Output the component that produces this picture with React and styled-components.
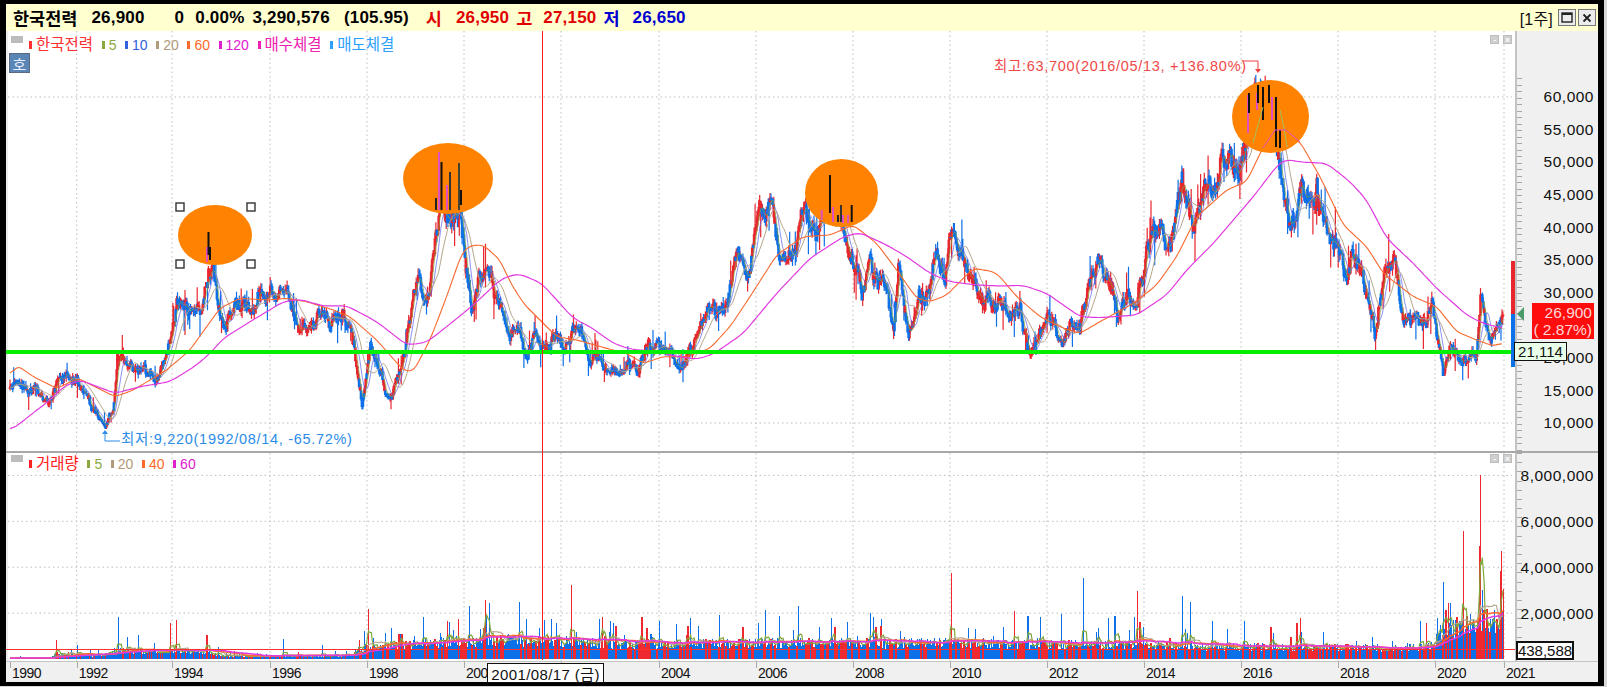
import styled, { createGlobalStyle } from "styled-components";

const GlobalStyle = createGlobalStyle`
    html, body {
        margin: 0;
        padding: 0;
        background: #d8d8d8;
    }
`

const Frame = styled.div`
    width: 1604px;
    height: 686px;
    box-sizing: border-box;
    padding: 4px 6px;
    background: #000;
    overflow: hidden;
`

const Window = styled.div`
    width: 1592px;
    height: 678px;
    background: #f0f0f0;
    display: flex;
    flex-direction: column;
`

const Header = styled.div`
    height: 27px;
    background: #ffffd0;
    display: flex;
    align-items: center;
    padding-left: 7px;
    font: bold 17px "Liberation Sans", "Noto Sans CJK KR", sans-serif;
    letter-spacing: 0.2px;
`

const Quote = styled.span`
    margin-left: ${props => props.$gap || 0}px;
    color: ${props => props.$color || "#000"};
    ${props => props.$hangul && "font-size: 17.5px; letter-spacing: 0;"}
    white-space: nowrap;
`

const WindowButtons = styled.div`
    margin-left: auto;
    display: flex;
    align-items: center;
    gap: 2px;
    padding-right: 2px;
`

const Period = styled.span`
    font: 16px "Liberation Sans", "Noto Sans CJK KR", sans-serif;
    margin-right: 3px;
    color: #111;
`

const WinButton = styled.button`
    width: 18px;
    height: 17px;
    padding: 0;
    border: 1px solid #777;
    background: #ececec;
    display: flex;
    align-items: center;
    justify-content: center;
`

const ChartArea = styled.div`
    position: relative;
    flex: 1;
    display: flex;
    flex-direction: column;
`

const Panel = styled.div`
    display: flex;
    height: ${props => props.$height}px;
    border-bottom: ${props => props.$divider ? "2px solid #a8a8a8" : "none"};
`

const Plot = styled.div`
    position: relative;
    width: 1509px;
    background: #fff;
    border-left: 2px solid #ececec;
    box-sizing: border-box;
`

const ChartSvg = styled.svg`
    display: block;
    position: absolute;
    left: -2px;
    top: 0;
    overflow: hidden;
`

const Axis = styled.div`
    position: relative;
    width: 83px;
    box-sizing: border-box;
    border-left: 2px solid #c4c4c4;
    padding-top: ${props => props.$top}px;
    background-color: #f0f0f0;
    background-image: repeating-linear-gradient(to bottom, #a8a8a8 0 1px, transparent 1px ${props => props.$step}px);
    background-size: 5px 100%;
    background-repeat: no-repeat;
    background-position: 0 ${props => props.$ticksFrom}px;
`

const AxisLabel = styled.div`
    height: ${props => props.$height}px;
    display: flex;
    align-items: center;
    justify-content: flex-end;
    padding-right: 4px;
    font: 15.5px "Liberation Sans", sans-serif;
    letter-spacing: 0.5px;
    color: #111;
`

const Legend = styled.div`
    position: absolute;
    left: 21px;
    top: ${props => props.$top}px;
    display: flex;
    align-items: center;
    gap: 8.6px;
    z-index: 2;
`

const LegendItem = styled.span`
    display: flex;
    align-items: center;
    gap: 4px;
    color: ${props => props.$color};
    font: ${props => props.$digits ? "14px" : "15.5px"} "Liberation Sans", "Noto Sans CJK KR", sans-serif;
    line-height: 18px;
    &::before {
        content: "";
        width: 3px;
        height: 8px;
        background: ${props => props.$color};
    }
`

const PanelGrip = styled.div`
    position: absolute;
    left: 3px;
    top: ${props => props.$top}px;
    width: 12px;
    height: 7px;
    background: #bcbcbc;
`

const HoButton = styled.div`
    position: absolute;
    left: 1px;
    top: 22px;
    width: 21px;
    height: 20px;
    box-sizing: border-box;
    border: 1px solid #5a6a80;
    background: #5b85b5;
    color: #e8f0ff;
    font: 15px "Noto Sans CJK KR", sans-serif;
    display: flex;
    align-items: center;
    justify-content: center;
`

const MiniButtons = styled.div`
    position: absolute;
    right: 3px;
    top: ${props => props.$top}px;
    display: flex;
    gap: 4px;
`

const MiniButton = styled.div`
    width: 9px;
    height: 9px;
    background: #cfcfcf;
    border: 1px solid #bdbdbd;
    box-sizing: border-box;
    color: #fff;
    font: bold 8px/7px "Liberation Sans", sans-serif;
    text-align: center;
`

const Note = styled.div`
    position: absolute;
    left: ${props => props.$left}px;
    top: ${props => props.$top}px;
    color: ${props => props.$color};
    font: 14.5px "Liberation Sans", "Noto Sans CJK KR", sans-serif;
    letter-spacing: 0.7px;
    white-space: nowrap;
`

const ValueBox = styled.div`
    position: absolute;
    left: ${props => props.$left}px;
    top: ${props => props.$top}px;
    width: ${props => props.$width}px;
    height: 19px;
    box-sizing: border-box;
    border: ${props => props.$thick ? 2 : 1}px solid #111;
    background: ${props => props.$bg};
    color: #111;
    font: 15px "Liberation Sans", sans-serif;
    display: flex;
    align-items: center;
    justify-content: center;
    z-index: 3;
`

const PriceTag = styled.div`
    position: absolute;
    right: 4px;
    top: 272px;
    width: 62px;
    height: 36px;
    background: #ff0c0c;
    color: #ffd8d8;
    font: 15.5px/17px "Liberation Sans", sans-serif;
    text-align: right;
    padding: 1px 2px 0 0;
    box-sizing: border-box;
    white-space: pre;
`

const Marker = styled.div`
    position: absolute;
    left: 0;
    top: 276px;
    width: 0;
    height: 0;
    border-top: 7px solid transparent;
    border-bottom: 7px solid transparent;
    border-right: 7px solid #4a9a6a;
`

const CrossHair = styled.div`
    position: absolute;
    left: 536px;
    top: 0;
    width: 1px;
    height: 629px;
    background: #ff1c1c;
    z-index: 2;
`

const TimeAxis = styled.div`
    position: relative;
    flex: 1;
    display: flex;
    padding-left: 4px;
    border-top: 1px solid #c4c4c4;
    font: 14px "Liberation Sans", sans-serif;
    letter-spacing: -0.5px;
    color: #111;
`

const YearCell = styled.div`
    width: ${props => props.$width}px;
    flex-shrink: 0;
    box-sizing: border-box;
    padding: 3px 0 0 2px;
    background: linear-gradient(#a8a8a8, #a8a8a8) left top / 1px 6px no-repeat;
`

const DateTag = styled.div`
    position: absolute;
    left: 481px;
    top: 1px;
    width: 117px;
    height: 20px;
    box-sizing: border-box;
    border: 1px solid #111;
    background: #fff;
    font: 15px "Liberation Sans", "Noto Sans CJK KR", sans-serif;
    letter-spacing: 0.4px;
    display: flex;
    align-items: center;
    justify-content: center;
    z-index: 3;
`

const RED = "#e8262e";
const BLUE = "#0c70e8";
const MAGENTA = "#e23ae0";
const ORANGE = "#f8692f";
const TAN = "#b4a48a";
const GREEN = "#80a83c";
const MA_BLUE = "#5a62ee";

const rng = (seed) => () => {
    seed = (seed + 0x6d2b79f5) | 0;
    let t = Math.imul(seed ^ (seed >>> 15), 1 | seed);
    t = (t + Math.imul(t ^ (t >>> 7), 61 | t)) ^ t;
    return ((t ^ (t >>> 14)) >>> 0) / 4294967296;
};

// points were read off 3x crops, so they get mapped back to page pixels here
const crop = (x0, y0, pts, maxX = Infinity) =>
    pts.map(([x, y]) => [x0 + x / 3, y0 + y / 3]).filter(p => p[0] < maxX);

const lerpAt = (pts, x) => {
    if (x <= pts[0][0]) return pts[0][1];
    for (let i = 1; i < pts.length; i++) {
        if (x <= pts[i][0]) {
            const [ax, ay] = pts[i - 1];
            const [bx, by] = pts[i];
            return ay + ((by - ay) * (x - ax)) / (bx - ax || 1);
        }
    }
    return pts[pts.length - 1][1];
};

const smooth = (pts, radius) => {
    const out = [];
    const first = pts[0][0];
    const last = pts[pts.length - 1][0];
    for (let x = first; x <= last; x += 2) {
        const from = Math.max(first, x - radius);
        const to = Math.min(last, x + radius);
        let sum = 0;
        let n = 0;
        for (let k = from; k <= to; k += 2) {
            sum += lerpAt(pts, k);
            n++;
        }
        out.push([x, sum / n]);
    }
    return out;
};

const pricePath = [
    ...crop(0, 130, [[30,770],[55,750],[90,770],[150,815],[175,750],[200,745],[235,755],[270,825],[315,885],[340,830],[355,660],[385,710],[420,720],[465,750],[510,640],[530,520],[560,540],[600,560],[625,420],[640,440],[670,600],[700,530],[740,510],[760,550],[790,460],[830,520],[860,470],[895,590],[940,590],[970,540],[990,590],[1030,540],[1060,640],[1085,830],[1110,640],[1135,700],[1165,810],[1205,730],[1225,590],[1250,450],[1280,500],[1300,350],[1320,180],[1345,240],[1380,220],[1395,380],[1415,560],[1440,440],[1470,430],[1510,580]], 510),
    ...crop(510, 130, [[0,600],[25,590],[45,670],[75,620],[110,670],[140,620],[165,650],[190,590],[215,600],[240,670],[280,710],[330,735],[350,690],[385,715],[415,630],[450,660],[470,650],[510,715],[550,650],[590,540],[640,545],[675,400],[715,410],[745,270],[785,220],[810,400],[850,360],[885,240],[915,330],[960,200],[1000,270],[1010,350],[1045,420],[1055,510],[1080,420],[1105,480],[1120,430],[1150,620],[1165,430],[1195,620],[1225,500],[1245,510],[1280,385],[1305,440],[1325,270],[1350,340],[1375,440],[1420,500],[1450,530]], 1000),
    ...crop(1000, 50, [[0,760],[30,810],[60,760],[85,900],[105,900],[145,780],[185,890],[215,820],[240,830],[260,750],[295,640],[340,740],[355,810],[380,730],[405,770],[440,620],[485,510],[510,590],[545,370],[580,520],[625,390],[645,440],[665,330],[715,380],[770,110],[790,180],[810,110],[835,280],[855,430],[885,520],[905,430],[945,510],[950,430],[985,580],[1010,560],[1040,690],[1060,590],[1090,700],[1125,840],[1155,640],[1182,630],[1210,820],[1240,810],[1280,820],[1295,760],[1330,1000],[1350,880],[1380,950],[1430,910],[1442,740],[1465,860],[1490,860],[1510,790]]),
];

const ma120 = [
    ...crop(0, 130, [[30,903],[150,810],[190,770],[240,750],[345,790],[420,770],[510,755],[590,705],[630,670],[670,625],[750,575],[850,515],[900,508],[970,528],[1040,527],[1130,575],[1220,645],[1280,637],[1340,590],[1420,525],[1500,450]], 510),
    ...crop(510, 130, [[0,437],[30,432],[95,460],[140,510],[190,565],[240,590],[310,640],[360,657],[440,665],[480,675],[560,688],[610,672],[700,610],[800,490],[900,385],[1000,320],[1050,308],[1130,345],[1190,380],[1260,430],[1320,455],[1400,465]], 1000),
    ...crop(1000, 50, [[0,708],[70,706],[140,730],[190,765],[240,800],[300,803],[410,795],[500,735],[560,660],[640,580],[700,510],[760,440],[835,342],[860,328],[900,336],[980,340],[1050,395],[1100,450],[1160,565],[1240,640],[1310,715],[1400,795],[1450,820],[1510,835]]),
];

const ma60 = [
    ...crop(0, 130, [[30,740],[50,705],[100,740],[170,775],[235,745],[345,800],[400,780],[500,720],[570,660],[620,590],[660,535],[720,505],[800,510],[860,505],[920,515],[1000,540],[1050,560],[1130,630],[1210,720],[1240,725],[1290,630],[1340,500],[1385,370],[1410,347],[1450,345],[1500,390]], 510),
    ...crop(510, 130, [[0,455],[40,520],[90,570],[140,620],[200,630],[290,655],[350,670],[400,700],[460,680],[530,680],[600,655],[660,590],[720,500],[800,375],[880,320],[960,315],[1030,285],[1100,340],[1160,420],[1220,505],[1260,515],[1310,495],[1390,415],[1450,425]], 1000),
    ...crop(1000, 50, [[0,680],[50,740],[120,800],[190,835],[240,850],[300,815],[400,760],[470,705],[530,620],[590,500],[680,420],[740,395],[790,290],[830,240],[900,275],[960,380],[1030,525],[1100,590],[1150,670],[1240,740],[1310,770],[1370,845],[1430,870],[1480,888],[1510,878]]),
];

const toPolyline = (pts) => pts.map(p => `${p[0].toFixed(1)},${p[1].toFixed(1)}`).join(" ");

const movingAvg = (xs, ys, n) => xs.map((x, i) => {
    const from = Math.max(0, i - n + 1);
    let sum = 0;
    for (let k = from; k <= i; k++) sum += ys[k];
    return [x, sum / (i - from + 1)];
});

const STEP = 0.936;
const START_X = 10;
const END_X = 1503;

const buildCandles = () => {
    const rand = rng(20210108);
    const xs = [];
    const closes = [];
    const wicks = { up: "", down: "" };
    const bodies = { up: "", down: "" };
    let fast = 0;
    let slow = 0;
    let prev = lerpAt(pricePath, START_X);
    for (let x = START_X; x <= END_X; x += STEP) {
        const base = lerpAt(pricePath, x);
        const amp = 2.4 + (423 - base) * 0.02;
        fast = fast * 0.5 + (rand() - 0.5) * amp * 2.8;
        slow = slow * 0.88 + (rand() - 0.5) * amp * 1.1;
        const close = base + fast + slow;
        const top = Math.min(prev, close) - rand() * amp * 1.3 - (rand() < 0.1 ? rand() * amp * 4.5 : 0);
        const bottom = Math.max(prev, close) + rand() * amp * 1.3 + (rand() < 0.1 ? rand() * amp * 4.5 : 0);
        let key = close < prev ? "up" : "down";
        if (rand() < 0.22) key = key === "up" ? "down" : "up";
        const px = x.toFixed(1);
        wicks[key] += `M${px} ${top.toFixed(1)}V${bottom.toFixed(1)}`;
        bodies[key] += `M${px} ${Math.min(prev, close).toFixed(1)}V${(Math.max(prev, close) + 0.6).toFixed(1)}`;
        xs.push(x);
        closes.push(close);
        prev = close;
    }
    return { xs, closes, wicks, bodies };
};

const VOL_BASE = 658;
const volProfile = [[10,1],[50,1],[56,6],[100,4],[112,8],[125,10],[160,8],[200,9],[225,3],[350,4],[362,13],[380,14],[460,21],[560,21],[600,18],[700,18],[900,19],[1000,18],[1230,14],[1400,13],[1432,15],[1440,32],[1470,42],[1503,45]];
const volSpikes = [
    [56,639,"r"],[118,616,"b"],[170,622,"r"],[176,619,"r"],[206,634,"r"],[283,638,"b"],[322,644,"b"],[368,608,"r"],
    [447,620,"r"],[458,618,"r"],[469,605,"b"],[485,599,"r"],[489,602,"b"],[556,622,"b"],[571,584,"r"],[599,618,"b"],[602,616,"r"],
    [798,605,"b"],[951,572,"r"],[1014,610,"r"],[1028,615,"b"],[1083,577,"b"],[1115,615,"b"],[1137,590,"r"],[1182,595,"b"],[1190,601,"b"],
    [1300,617,"r"],[1426,622,"r"],[1443,581,"b"],[1448,602,"r"],[1463,530,"r"],[1479,545,"r"],[1480,474,"r"],[1501,550,"r"],[1503,588,"r"],
];

const buildVolume = () => {
    const rand = rng(77123);
    const xs = [];
    const hs = [];
    const bars = { r: "", b: "", rWide: "" };
    for (let x = START_X; x <= END_X; x += STEP) {
        const base = lerpAt(volProfile, x);
        let h = base * (0.55 + rand() * 0.6);
        if (rand() < 0.07) h *= 1.6 + rand() * 1;
        let key = rand() < 0.22 ? "r" : "b";
        const spike = volSpikes.find(s => Math.abs(s[0] - x) < STEP / 2 + 0.1);
        if (spike) {
            h = VOL_BASE - spike[1];
            key = spike[2];
        } else if (key === "r" && x > 360) {
            // most red weeks after the 1997 jump read as 2px columns
            key = "rWide";
        }
        bars[key] += `M${Math.round(x) + 0.5} ${VOL_BASE}V${Math.round(VOL_BASE - h)}`;
        xs.push(x);
        hs.push(h);
    }
    const line = (n) => movingAvg(xs, hs, n).map(([x, h]) => [x, VOL_BASE - h]);
    return { bars, line };
};

const candles = buildCandles();
const volume = buildVolume();

const priceTicks = [60000, 55000, 50000, 45000, 40000, 35000, 30000, 25000, 20000, 15000, 10000];
const priceY = (p) => 423 - (p - 10000) * 0.0652;
const volTicks = [8000000, 6000000, 4000000, 2000000];
const volY = (v) => VOL_BASE - (v / 1000000) * 22.95;
const yearTicks = [10, 76.7, 172, 270, 367, 464, 561, 659, 756, 853, 950, 1047, 1144, 1241, 1338, 1435, 1504];

const ellipses = [
    { cx: 215, cy: 235, rx: 37, ry: 30 },
    { cx: 448, cy: 178.5, rx: 45, ry: 35.5 },
    { cx: 841.5, cy: 193, rx: 36.5, ry: 34 },
    { cx: 1270.5, cy: 116.5, rx: 38.5, ry: 36.5 },
];

// candles that stay visible through the orange circles: [x, top, bottom, colour]
const circleBars = [
    [207,247,262,"#e050c0"],[208.5,232,255,"#111"],[210,247,260,"#111"],
    [436,198,210,"#222"],[439,152,210,"#e050c0"],[441.5,162,210,"#111"],[447,185,210,"#e050c0"],[450,172,210,"#333"],[459,163,210,"#443"],[461,190,205,"#111"],
    [821.7,210,220,"#e050c0"],[830,175,213,"#111"],[833,207,222,"#e050c0"],[838,215,222,"#222"],[841,205,222,"#333"],[843,215,223,"#e050c0"],[848,215,223,"#e050c0"],[851.7,205,222,"#111"],
    [1248,95,133,"#e050c0"],[1249,93,113,"#111"],[1257,93,110,"#e050c0"],[1258,85,103,"#111"],[1263,87,120,"#111"],[1269,85,103,"#111"],[1272,97,120,"#e050c0"],[1276,97,147,"#111"],[1280,130,148,"#111"],
];

const handles = [[180, 207], [251, 207], [180, 264], [251, 264]];

const Grid = ({ left, right, top, bottom, rows }) => (
    <g stroke="#bdbdbd" strokeWidth="1" strokeDasharray="1.5 3">
        {yearTicks.slice(1).map(x => <line key={x} x1={x} x2={x} y1={top} y2={bottom} />)}
        {rows.map(y => <line key={y} x1={left} x2={right} y1={y} y2={y} />)}
    </g>
);

const PriceChart = () => (
    <ChartSvg width="1509" height="418" viewBox="6 31 1509 418">
        <Grid left={8} right={1512} top={31} bottom={449} rows={priceTicks.map(priceY)} />
        <g fill="none">
            <path d={candles.wicks.up} stroke={RED} strokeWidth="1.2" />
            <path d={candles.wicks.down} stroke={BLUE} strokeWidth="1.2" />
            <path d={candles.bodies.up} stroke={RED} strokeWidth="2.6" />
            <path d={candles.bodies.down} stroke={BLUE} strokeWidth="2.6" />
            <polyline points={toPolyline(movingAvg(candles.xs, candles.closes, 5))} stroke={GREEN} strokeWidth="0.7" />
            <polyline points={toPolyline(movingAvg(candles.xs, candles.closes, 10))} stroke={MA_BLUE} strokeWidth="0.7" />
            <polyline points={toPolyline(movingAvg(candles.xs, candles.closes, 20))} stroke={TAN} strokeWidth="1" />
            <polyline points={toPolyline(smooth(ma60, 4))} stroke={ORANGE} strokeWidth="1.1" />
            <polyline points={toPolyline(smooth(ma120, 6))} stroke={MAGENTA} strokeWidth="1.2" />
        </g>
        {ellipses.map(e => <ellipse key={e.cx} {...e} fill="#ff8200" />)}
        {circleBars.map(([x, y1, y2, color], i) => (
            <line key={i} x1={x} x2={x} y1={y1} y2={y2} stroke={color} strokeWidth="2" />
        ))}
        <g fill="none" strokeWidth="1">
            <polyline points="1253,143 1258,125 1263,107" stroke="#a8c060" />
            <polyline points="1280,110 1284,128 1287,147" stroke="#a8c060" />
            <polyline points="1263,148 1275,130 1286,130 1300,142" stroke="#e050c0" />
        </g>
        {handles.map(([x, y]) => (
            <rect key={x + "" + y} x={x - 4} y={y - 4} width="8" height="8" fill="#fff" stroke="#333" strokeWidth="1.4" />
        ))}
        <path d="M1243 61H1258V70" fill="none" stroke="#f04040" />
        <path d="M1255 69H1261L1258 73Z" fill="#f04040" />
        <path d="M120 441H105V433" fill="none" stroke="#2c8ce8" />
        <path d="M102 434H108L105 430Z" fill="#2c8ce8" />
        <rect x="6" y="350" width="1509" height="4" fill="#00f000" />
        <rect x="1511" y="261" width="4" height="53" fill={RED} />
        <rect x="1511" y="314" width="4" height="53" fill={BLUE} />
    </ChartSvg>
);

const VolumeChart = () => (
    <ChartSvg width="1509" height="208" viewBox="6 452 1509 208">
        <Grid left={8} right={1512} top={452} bottom={660} rows={volTicks.map(volY)} />
        <g fill="none" shapeRendering="crispEdges">
            <path d={volume.bars.b} stroke={BLUE} strokeWidth="1" />
            <path d={volume.bars.r} stroke="#ee2a30" strokeWidth="1" />
            <path d={volume.bars.rWide} stroke="#ee2a30" strokeWidth="2" />
        </g>
        <g fill="none">
            <polyline points={toPolyline(volume.line(5))} stroke={GREEN} strokeWidth="1.2" />
            <polyline points={toPolyline(volume.line(20))} stroke={TAN} strokeWidth="1.1" />
            <polyline points={toPolyline(volume.line(40))} stroke={ORANGE} strokeWidth="1.5" />
            <polyline points={toPolyline(volume.line(60))} stroke={MAGENTA} strokeWidth="1.5" />
        </g>
        <rect x="6" y="648" width="1510" height="1" fill="#ff3030" />
    </ChartSvg>
);

const MaximizeIcon = () => (
    <svg width="12" height="11" viewBox="0 0 12 11"><rect x="1" y="1" width="10" height="9" fill="none" stroke="#222" strokeWidth="1.4" /><rect x="1" y="1" width="10" height="2" fill="#222" /></svg>
);

const CloseIcon = () => (
    <svg width="10" height="10" viewBox="0 0 10 10"><path d="M1.5 1.5L8.5 8.5M8.5 1.5L1.5 8.5" stroke="#222" strokeWidth="1.8" /></svg>
);

const App = () => (
    <Frame>
        <GlobalStyle />
        <Window>
            <Header>
                <Quote $hangul>한국전력</Quote>
                <Quote $gap={14}>26,900</Quote>
                <Quote $gap={30}>0</Quote>
                <Quote $gap={11}>0.00%</Quote>
                <Quote $gap={8}>3,290,576</Quote>
                <Quote $gap={14}>(105.95)</Quote>
                <Quote $gap={17} $hangul $color="#e00000">시</Quote>
                <Quote $gap={14} $color="#e00000">26,950</Quote>
                <Quote $gap={7} $hangul $color="#e00000">고</Quote>
                <Quote $gap={11} $color="#e00000">27,150</Quote>
                <Quote $gap={7} $hangul $color="#0000d0">저</Quote>
                <Quote $gap={13} $color="#0000d0">26,650</Quote>
                <WindowButtons>
                    <Period>[1주]</Period>
                    <WinButton><MaximizeIcon /></WinButton>
                    <WinButton><CloseIcon /></WinButton>
                </WindowButtons>
            </Header>
            <ChartArea>
                <Panel $height={420} $divider>
                    <Plot>
                        <PriceChart />
                        <PanelGrip $top={5} />
                        <HoButton>호</HoButton>
                        <Legend $top={5}>
                            <LegendItem $color="#ff3030">한국전력</LegendItem>
                            <LegendItem $color="#8aa83e" $digits>5</LegendItem>
                            <LegendItem $color="#3060e0" $digits>10</LegendItem>
                            <LegendItem $color="#b09a7a" $digits>20</LegendItem>
                            <LegendItem $color="#ff6a28" $digits>60</LegendItem>
                            <LegendItem $color="#e020d0" $digits>120</LegendItem>
                            <LegendItem $color="#f020b0">매수체결</LegendItem>
                            <LegendItem $color="#2ca0ff">매도체결</LegendItem>
                        </Legend>
                        <MiniButtons $top={4}><MiniButton>-</MiniButton><MiniButton>x</MiniButton></MiniButtons>
                        <Note $left={986} $top={23} $color="#f04848">최고:63,700(2016/05/13, +136.80%)</Note>
                        <Note $left={113} $top={396} $color="#2c8ce8">최저:9,220(1992/08/14, -65.72%)</Note>
                    </Plot>
                    <Axis $top={50} $step={6.52} $ticksFrom={47}>
                        {priceTicks.map(p => <AxisLabel key={p} $height={32.6}>{p.toLocaleString("en-US")}</AxisLabel>)}
                        <Marker />
                        <PriceTag>{"26,900\n( 2.87%)"}</PriceTag>
                        <ValueBox $left={-3} $top={311} $width={53} $bg="#eaffea">21,114</ValueBox>
                    </Axis>
                </Panel>
                <Panel $height={208}>
                    <Plot>
                        <VolumeChart />
                        <PanelGrip $top={2} />
                        <Legend $top={2}>
                            <LegendItem $color="#ff2020">거래량</LegendItem>
                            <LegendItem $color="#8aa83e" $digits>5</LegendItem>
                            <LegendItem $color="#b09a7a" $digits>20</LegendItem>
                            <LegendItem $color="#ff6a28" $digits>40</LegendItem>
                            <LegendItem $color="#e020d0" $digits>60</LegendItem>
                        </Legend>
                        <MiniButtons $top={1}><MiniButton>-</MiniButton><MiniButton>x</MiniButton></MiniButtons>
                    </Plot>
                    <Axis $top={0} $step={9.18} $ticksFrom={0}>
                        {volTicks.map(v => <AxisLabel key={v} $height={45.9}>{v.toLocaleString("en-US")}</AxisLabel>)}
                        <ValueBox $left={-1} $top={188} $width={58} $thick $bg="#fff">438,588</ValueBox>
                    </Axis>
                </Panel>
                <CrossHair />
                <TimeAxis>
                    {yearTicks.map((x, i) => (
                        <YearCell key={x} $width={i < yearTicks.length - 1 ? yearTicks[i + 1] - x : 60}>
                            {x === 1504 ? 2021 : 1990 + i * 2}
                        </YearCell>
                    ))}
                    <DateTag>2001/08/17 (금)</DateTag>
                </TimeAxis>
            </ChartArea>
        </Window>
    </Frame>
);

export default App
